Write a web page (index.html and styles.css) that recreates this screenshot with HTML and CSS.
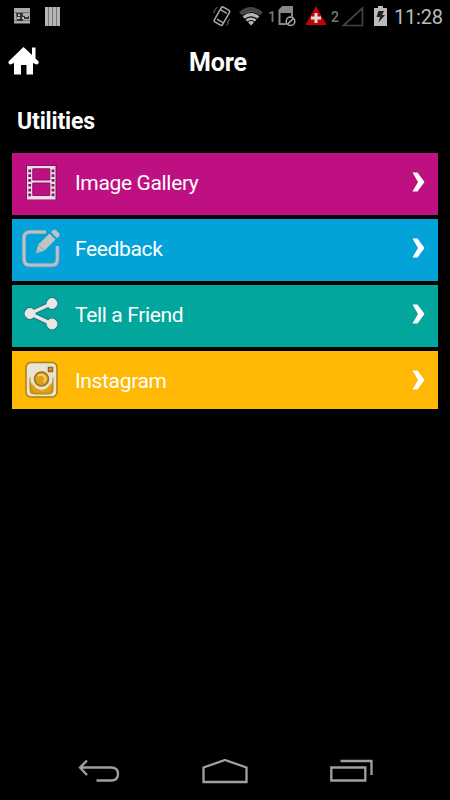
FILE: index.html
```html
<!DOCTYPE html>
<html lang="en">
<head>
  <meta charset="UTF-8" />
  <meta name="viewport" content="width=device-width, initial-scale=1.0"/>
  <title>More</title>
  <link rel="stylesheet" href="styles.css">
</head>
<body>
  <div class="status-bar">
    <div class="notifications">
      <svg width="16" height="16" viewBox="0 0 16 16">
        <rect width="16" height="15.5" fill="#aaa"/>
        <path d="M0 4h16v1H0zM0 12h16v1H0z" fill="#777"/>
        <path d="M2 5h7v3h6v3H9v2H3z" fill="#333"/>
        <path d="M4 6h2v2H4zM3 9h3v2H3zM8 9h2v2H8zM11 8h3v1h-3z" fill="#bbb"/>
      </svg>
      <svg width="15" height="19" viewBox="0 0 15 19">
        <rect width="15" height="19" fill="#b5b5b5"/>
        <path d="M3.5 0v19M7.5 0v19M11.5 0v19" stroke="#777" stroke-width="1"/>
      </svg>
    </div>
    <div class="system">
      <svg width="20" height="22" viewBox="0 0 20 22">
        <rect x="5.2" y="2.500" width="9.500" height="17" rx="1.5" transform="rotate(30 9.7 11)" fill="none" stroke="#aaa" stroke-width="1.5"/>
        <path d="M8.3 4.6l6.500 3.700M5 14.2l6.300 3.600" stroke="#aaa" stroke-width="1.4"/>
        <path d="M1.500 8l2-4 2-2M15.500 18l2-4M14.500 20.500l2-2.500" fill="none" stroke="#777"/>
      </svg>
      <svg class="wifi" width="24" height="19" viewBox="0 0 24 19">
        <path d="M0 5.2Q12-5 24 5.2L12 18.5z" fill="#444"/>
        <path d="M3.2 8.7Q12 1 20.8 8.7L12 18.5z" fill="#b5b5b5"/>
        <path d="M3 9Q12 2 21 9M6 12.3Q12 7.4 18 12.3M8.5 15Q12 12 15.5 15" fill="none" stroke="#000" stroke-width="1.1"/>
      </svg>
      <span class="slot slot-one">1</span>
      <svg class="sim" width="18" height="21" viewBox="0 0 18 21">
        <path d="M4.500 1H14v17H1.500V4z" fill="none" stroke="#888" stroke-width="2"/>
        <path d="M2 2h12v5H2z" fill="#888"/>
        <path d="M0 0h4L0 4z" fill="#000"/>
        <circle cx="12.500" cy="15.3" r="5.3" fill="#000"/>
        <circle cx="12.500" cy="15.3" r="4.300" fill="none" stroke="#aaa" stroke-width="1.5"/>
        <path d="M9.7 18l5.600-5.400" stroke="#aaa" stroke-width="1.5"/>
      </svg>
      <svg class="alert" width="22" height="20" viewBox="0 0 22 20">
        <path d="M11 0l10.500 19H.5z" fill="#c4000a"/>
        <path d="M11 7v10M6 12h10" stroke="#ddd" stroke-width="3"/>
      </svg>
      <span class="slot slot-two">2</span>
      <svg class="signal" width="23" height="21" viewBox="0 0 23 21">
        <path d="M21.500 2v17.500H2.500z" fill="none" stroke="#444" stroke-width="1.7"/>
      </svg>
      <svg class="battery" width="13" height="20" viewBox="0 0 13 20">
        <path d="M4 0h5v2h4v18H0V2h4z" fill="#bbb"/>
        <path d="M4.500 5H10L8 9h3l-6.500 7.500L6 11H2.500z" fill="#222"/>
      </svg>
      <span class="clock">11:28</span>
    </div>
  </div>

  <header class="header">
    <svg class="home" width="32" height="28" viewBox="0 0 32 28">
      <path d="M15.500 0L.5 14.500Q0 17 2.500 17.500L6 16V27.500h7V18h5.500v9.500h6.500V16l3.500 1.500Q31 17 30.700 14.500L27.500 11.500V.5H24V8z" fill="#fff"/>
    </svg>
    <h1>More</h1>
  </header>

  <main class="content">
    <h2>Utilities</h2>
    <div class="menu">
      <div class="item gallery">
        <svg class="icon" viewBox="0 0 42 42">
          <path d="M6 2h31v35H6z" fill="#8c1064"/>
          <path d="M7 3h28.500v33.500H7z" fill="#eadde6"/>
          <path d="M12.800 5.800h17v11.200h-17zM12.800 20h17v12.500h-17z" fill="#be1080" stroke="#8c1064" stroke-width="1"/>
          <path d="M9.700 6.500V34M33 6.500V34" stroke="#8c1064" stroke-width="2.700" stroke-dasharray="2.700 2.100"/>
        </svg>
        <span class="label">Image Gallery</span>
        <svg class="arrow" viewBox="0 0 13 20"><path d="M.5.5h5L12.500 10l-7 9.500h-5L6 10z"/></svg>
      </div>
      <div class="item feedback">
        <svg class="icon" viewBox="0 0 42 42">
          <path d="M26 3H10Q4 3 4 9v21q0 6.500 6 6.500h22q5.500 0 5.500-6.500V17" fill="none" stroke="#5fa0b8" stroke-width="4"/>
          <path d="M26 3H10Q4 3 4 9v21q0 6 6 6h22q5.300 0 5.300-6V17" fill="none" stroke="#bbc0c3" stroke-width="3"/>
          <path d="M15.800 24.500l2.500-9L29.500 4.500l6 6L24.500 21.500z" fill="#c2c2c2"/>
          <path d="M31 3l2-2q1.500-1 3 .3l3 3q1.300 1.500 0 3l-2 2z" fill="#c2c2c2"/>
          <path d="M18.300 16l5.800 5.500M16 24.500l4-4" stroke="#8798a0" stroke-width=".8"/>
        </svg>
        <span class="label">Feedback</span>
        <svg class="arrow" viewBox="0 0 13 20"><path d="M.5.5h5L12.500 10l-7 9.500h-5L6 10z"/></svg>
      </div>
      <div class="item friend">
        <svg class="icon" viewBox="0 0 42 42">
          <g fill="#1c7d79" stroke="#1c7d79">
            <path d="M32 8.500L10 18.500l22 10.500" fill="none" stroke-width="5.500"/>
            <circle cx="32" cy="8.500" r="6"/><circle cx="10" cy="18.500" r="6"/><circle cx="32" cy="29" r="6"/>
          </g>
          <g fill="#e8e6e6" stroke="#e8e6e6">
            <path d="M32 8.500L10 18.500l22 10.500" fill="none" stroke-width="3.500"/>
            <circle cx="32" cy="8.500" r="5"/><circle cx="10" cy="18.500" r="5"/><circle cx="32" cy="29" r="5"/>
          </g>
        </svg>
        <span class="label">Tell a Friend</span>
        <svg class="arrow" viewBox="0 0 13 20"><path d="M.5.5h5L12.500 10l-7 9.500h-5L6 10z"/></svg>
      </div>
      <div class="item instagram">
        <svg class="icon" viewBox="0 0 42 42">
          <rect x="6" y="3.500" width="31" height="34.500" rx="5" fill="#e9e3d6" stroke="#b17f08" stroke-width="1.500"/>
          <path d="M10 18.500h23V31q0 4-4 4H14q-4 0-4-4z" fill="#d69b0d"/>
          <path d="M10 18.500V31q0 4 4 4h15q4 0 4-4V18.500" fill="none" stroke="#b98719" stroke-width="1"/>
          <circle cx="21.500" cy="20" r="11" fill="#e9e3d6"/>
          <path d="M12.500 24v6q0 3 3 3h12q3 0 3-3v-6q-3 7-9 7t-9-7z" fill="#e0a411"/>
          <circle cx="21.500" cy="20" r="7" fill="#d9a01a" stroke="#9c7313" stroke-width="1.500"/>
          <path d="M18 17q3-2.500 6 0 3 2.500 0 6" fill="none" stroke="#fbd060" stroke-width="2"/>
          <rect x="28.500" y="8.500" width="4" height="4" fill="#dba12c" stroke="#946b13" stroke-width="1.500"/>
        </svg>
        <span class="label">Instagram</span>
        <svg class="arrow" viewBox="0 0 13 20"><path d="M.5.5h5L12.500 10l-7 9.500h-5L6 10z"/></svg>
      </div>
    </div>
  </main>

  <nav class="nav-bar">
    <svg width="42" height="24" viewBox="0 0 42 24">
      <path d="M2 8.500h31Q40 8.500 40 15t-7 6.500H18.500M9 1.500L2 8.500l7 7.500"/>
    </svg>
    <svg width="46" height="26" viewBox="0 0 46 26">
      <path d="M1.500 23V8.500L23 1l21.500 7.500V23z"/>
    </svg>
    <svg width="43" height="24" viewBox="0 0 43 24">
      <path d="M1.300 8.500h34v13h-34zM10.500 2h31v14"/>
    </svg>
  </nav>
</body>
</html>
```

FILE: styles.css
```css
* {
  box-sizing: border-box;
  margin: 0;
  padding: 0;
}
body {
  height: 800px;
  display: flex;
  flex-direction: column;
  overflow: hidden;
  background-color: #000;
  color: #fff;
  font-family: Roboto, sans-serif;
}
svg {
  display: block;
  flex-shrink: 0;
}

/* Status bar */
.status-bar {
  display: flex;
  justify-content: space-between;
  height: 32px;
  padding: 0 7px 0 14px;
}
.notifications,
.system {
  display: flex;
  align-items: center;
}
.notifications {
  gap: 15px;
}
.wifi {
  margin-left: 7px;
}
.slot {
  color: #777;
  font-size: 14px;
  font-weight: 500;
  line-height: 16px;
  padding-top: 2px;
}
.slot-one {
  width: 9px;
  margin-left: 5px;
}
.sim {
  margin-left: 1px;
}
.alert {
  margin-left: 9px;
}
.slot-two {
  width: 10px;
  margin-left: 4px;
}
.battery {
  margin: 0 7px 1px 10px;
}
.clock {
  width: 49px;
  padding-top: 1px;
  color: #bbb;
  font-size: 20px;
  letter-spacing: -0.2px;
  white-space: nowrap;
}

/* Header */
.header {
  display: grid;
  grid-template-columns: 32px 1fr 32px;
  align-items: center;
  height: 60px;
  padding: 0 22px 0 8px;
}
.home {
  margin-bottom: 2px;
}
h1 {
  font-size: 25px;
  font-weight: 700;
  letter-spacing: -0.1px;
  text-align: center;
}

/* Menu */
.content {
  flex: 1;
  padding: 16px 12px 0;
}
h2 {
  height: 45px;
  padding-left: 5px;
  font-size: 23px;
  font-weight: 700;
  letter-spacing: -0.15px;
  line-height: 28px;
}
.menu {
  display: flex;
  flex-direction: column;
  gap: 4px;
}
.item {
  display: flex;
  align-items: center;
  height: 62px;
  padding: 0 13px 0 8px;
}
.icon {
  width: 42px;
  height: 42px;
}
.label {
  flex: 1;
  margin-left: 13px;
  padding-bottom: 2px;
  font-size: 21px;
  letter-spacing: -0.35px;
}
.arrow {
  width: 13px;
  height: 20px;
  margin-bottom: 4px;
  fill: #fff;
}
.gallery {
  background-color: #be1080;
}
.feedback {
  background-color: #03a3d9;
}
.friend {
  background-color: #03a69d;
}
.instagram {
  height: 58px;
  background-color: #ffb803;
}
.instagram .label {
  padding: 2px 0 0;
}
.instagram .arrow {
  margin-bottom: 0;
}

/* Navigation bar */
.nav-bar {
  display: flex;
  justify-content: space-between;
  height: 56px;
  padding: 15px 77px 0 78px;
}
.nav-bar path {
  fill: none;
  stroke: #a0a0a0;
  stroke-width: 2.3;
}
```
